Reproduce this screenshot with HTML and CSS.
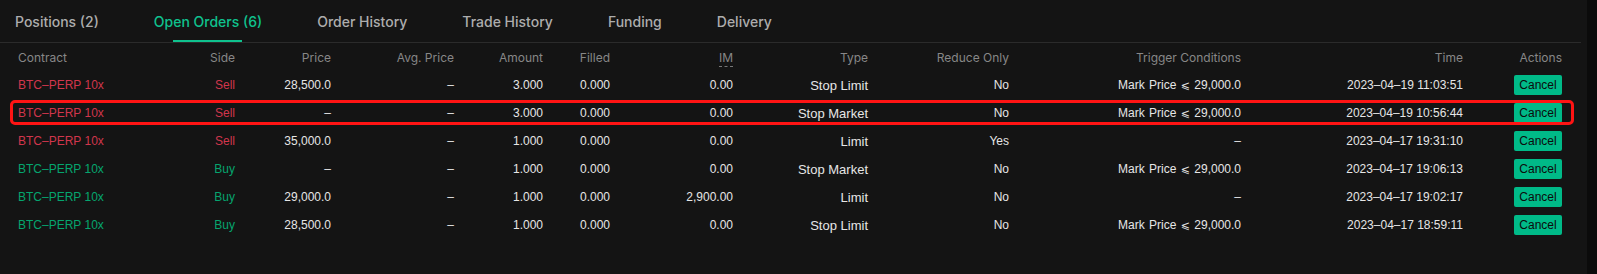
FILE: index.html
```html
<!DOCTYPE html>
<html>
<head>
<meta charset="utf-8">
<link rel="stylesheet" href="styles.css">
</head>
<body>
<div class="page">
  <div class="main">
    <div class="tabs">
      <div class="tab">Positions (2)</div>
      <div class="tab active">Open Orders (6)</div>
      <div class="tab">Order History</div>
      <div class="tab">Trade History</div>
      <div class="tab">Funding</div>
      <div class="tab">Delivery</div>
    </div>
    <div class="table">
      <div class="row head">
        <div class="c l">Contract</div>
        <div class="c">Side</div>
        <div class="c">Price</div>
        <div class="c">Avg. Price</div>
        <div class="c">Amount</div>
        <div class="c">Filled</div>
        <div class="c"><span class="dash">IM</span></div>
        <div class="c">Type</div>
        <div class="c">Reduce Only</div>
        <div class="c">Trigger Conditions</div>
        <div class="c">Time</div>
        <div class="c">Actions</div>
      </div>

      <div class="row">
        <div class="c l sell">BTC–PERP 10x</div>
        <div class="c sell">Sell</div>
        <div class="c">28,500.0</div>
        <div class="c">–</div>
        <div class="c">3.000</div>
        <div class="c">0.000</div>
        <div class="c">0.00</div>
        <div class="c type">Stop Limit</div>
        <div class="c">No</div>
        <div class="c trig">Mark Price <span class="le">⩽</span> 29,000.0</div>
        <div class="c">2023–04–19 11:03:51</div>
        <div class="c"><span class="btn">Cancel</span></div>
      </div>

      <div class="row">
        <div class="c l sell">BTC–PERP 10x</div>
        <div class="c sell">Sell</div>
        <div class="c">–</div>
        <div class="c">–</div>
        <div class="c">3.000</div>
        <div class="c">0.000</div>
        <div class="c">0.00</div>
        <div class="c type">Stop Market</div>
        <div class="c">No</div>
        <div class="c trig">Mark Price <span class="le">⩽</span> 29,000.0</div>
        <div class="c">2023–04–19 10:56:44</div>
        <div class="c"><span class="btn">Cancel</span></div>
      </div>

      <div class="row">
        <div class="c l sell">BTC–PERP 10x</div>
        <div class="c sell">Sell</div>
        <div class="c">35,000.0</div>
        <div class="c">–</div>
        <div class="c">1.000</div>
        <div class="c">0.000</div>
        <div class="c">0.00</div>
        <div class="c type">Limit</div>
        <div class="c">Yes</div>
        <div class="c">–</div>
        <div class="c">2023–04–17 19:31:10</div>
        <div class="c"><span class="btn">Cancel</span></div>
      </div>

      <div class="row">
        <div class="c l buy">BTC–PERP 10x</div>
        <div class="c buy">Buy</div>
        <div class="c">–</div>
        <div class="c">–</div>
        <div class="c">1.000</div>
        <div class="c">0.000</div>
        <div class="c">0.00</div>
        <div class="c type">Stop Market</div>
        <div class="c">No</div>
        <div class="c trig">Mark Price <span class="le">⩽</span> 29,000.0</div>
        <div class="c">2023–04–17 19:06:13</div>
        <div class="c"><span class="btn">Cancel</span></div>
      </div>

      <div class="row">
        <div class="c l buy">BTC–PERP 10x</div>
        <div class="c buy">Buy</div>
        <div class="c">29,000.0</div>
        <div class="c">–</div>
        <div class="c">1.000</div>
        <div class="c">0.000</div>
        <div class="c">2,900.00</div>
        <div class="c type">Limit</div>
        <div class="c">No</div>
        <div class="c">–</div>
        <div class="c">2023–04–17 19:02:17</div>
        <div class="c"><span class="btn">Cancel</span></div>
      </div>

      <div class="row">
        <div class="c l buy">BTC–PERP 10x</div>
        <div class="c buy">Buy</div>
        <div class="c">28,500.0</div>
        <div class="c">–</div>
        <div class="c">1.000</div>
        <div class="c">0.000</div>
        <div class="c">0.00</div>
        <div class="c type">Stop Limit</div>
        <div class="c">No</div>
        <div class="c trig">Mark Price <span class="le">⩽</span> 29,000.0</div>
        <div class="c">2023–04–17 18:59:11</div>
        <div class="c"><span class="btn">Cancel</span></div>
      </div>

      <div class="highlight"></div>
    </div>
  </div>
  <div class="scroll"></div>
</div>
</body>
</html>
```

FILE: styles.css
```css
* { box-sizing: border-box; }
html, body {
  margin: 0;
  padding: 0;
  background: #141414;
  width: 1597px;
  height: 274px;
  overflow: hidden;
}
.page {
  display: flex;
  width: 1597px;
  height: 274px;
}
.main {
  width: 1581px;
  margin-right: 6px;
}
.scroll {
  width: 10px;
  height: 274px;
  background: #0b0b0b;
}
.tabs {
  display: flex;
  height: 43px;
  padding: 0 0 0 15px;
  gap: 55px;
  border-bottom: 1px solid #2b2b2b;
  font-family: Inter, "Liberation Sans", sans-serif;
  font-size: 14px;
  font-weight: 500;
  color: #adadad;
}
.tab {
  position: relative;
  height: 42px;
  line-height: 44px;
  white-space: nowrap;
}
.tab.active {
  color: #0fc28e;
}
.tab.active::after {
  content: "";
  position: absolute;
  left: 50%;
  bottom: 0;
  width: 69px;
  height: 2px;
  margin-left: -35px;
  background: #0fc28e;
}
.table {
  position: relative;
  padding-left: 18px;
}
.row {
  display: grid;
  grid-template-columns: 122px 95px 96px 123px 89px 67px 123px 135px 141px 232px 222px 99px;
  height: 28px;
  align-items: center;
  font-family: "Liberation Sans", Arial, sans-serif;
  font-size: 12px;
  color: #e6e6e6;
}
.row.head {
  font-family: Inter, "Liberation Sans", sans-serif;
  color: #878787;
}
.c {
  text-align: right;
  white-space: nowrap;
}
.c.l { text-align: left; }
.type { font-size: 13px; }
.trig { word-spacing: 1px; }
.le {
  font-family: "DejaVu Sans", sans-serif;
  font-size: 11px;
}
.sell { color: #d1364c; }
.buy { color: #05a56e; }
.dash {
  border-bottom: 1px dashed #777;
  padding-bottom: 1px;
}
.btn {
  display: inline-block;
  width: 48px;
  height: 20px;
  line-height: 20px;
  text-align: center;
  background: #00ba88;
  color: #0c0c0c;
  border-radius: 2px;
  font-size: 12px;
}
.highlight {
  position: absolute;
  left: 10px;
  top: 57px;
  width: 1564px;
  height: 25px;
  border: 3px solid #ff1414;
  border-radius: 5px;
}
```
